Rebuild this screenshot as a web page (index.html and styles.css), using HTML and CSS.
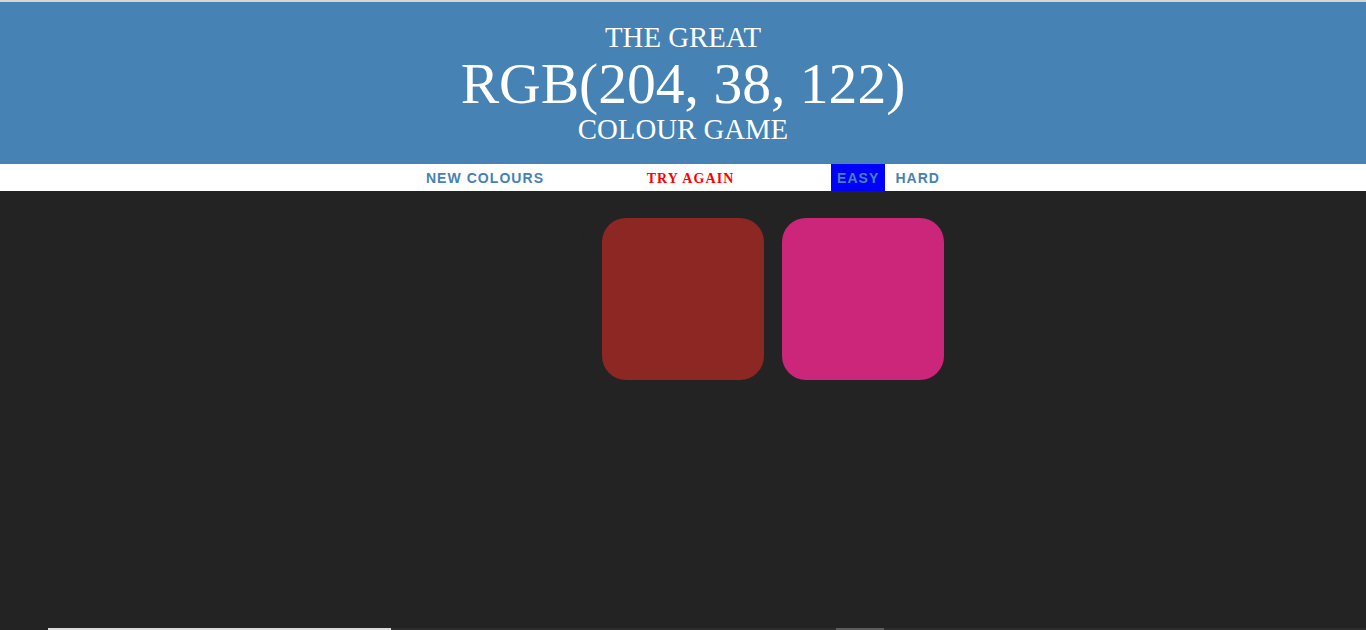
FILE: index.html
```html
<!DOCTYPE html>
<html>
<head>
<meta charset="utf-8">
<title>Colour Game</title>
<link rel="stylesheet" href="styles.css">
</head>
<body>
<div class="topline"></div>
<h1 class="title">
  <span class="line">The Great</span>
  <span class="line big">RGB(204, 38, 122)</span>
  <span class="line">Colour Game</span>
</h1>
<div class="stripe">
  <button class="btn">New Colours</button>
  <span class="message">Try Again</span>
  <button class="btn selected">Easy</button>
  <button class="btn">Hard</button>
</div>
<main class="main">
  <div class="container">
    <div class="square sq-hidden"></div>
    <div class="square sq-red"></div>
    <div class="square sq-pink"></div>
  </div>
</main>
<div class="bottomstrip">
  <div class="seg seg-a"></div>
  <div class="seg seg-b"></div>
  <div class="seg seg-c"></div>
  <div class="seg seg-d"></div>
  <div class="seg seg-e"></div>
</div>
</body>
</html>
```
FILE: styles.css
```css
html, body {
  margin: 0;
  padding: 0;
}
body {
  background: #232323;
  font-family: "Liberation Serif", "Times New Roman", serif;
  height: 630px;
  display: flex;
  flex-direction: column;
  overflow: hidden;
}
.topline {
  height: 2px;
  background: #d6d6d6;
  flex: none;
}
.title {
  margin: 0;
  flex: none;
  background: #4682b4;
  color: #ffffff;
  font-weight: normal;
  font-size: 28.8px;
  text-transform: uppercase;
  text-align: center;
  padding: 20px 0 19px;
}
.line {
  display: block;
  line-height: 30.8px;
}
.line.big {
  font-size: 57.6px;
  line-height: 61.6px;
}
.stripe {
  flex: none;
  background: #ffffff;
  height: 27px;
  display: flex;
  justify-content: center;
  align-items: stretch;
  gap: 4px;
}
.btn {
  border: none;
  background: none;
  margin: 0;
  padding: 2px 6px 0;
  font-family: "Liberation Sans", Arial, sans-serif;
  font-size: 14px;
  font-weight: 700;
  letter-spacing: 1.05px;
  text-transform: uppercase;
  color: #4682b4;
  line-height: 25px;
}
.btn.selected {
  background: #0000ff;
}
.message {
  width: 273px;
  padding-top: 2px;
  text-align: center;
  color: #ff0000;
  font-family: "Liberation Serif", "Times New Roman", serif;
  font-weight: 700;
  font-size: 14px;
  letter-spacing: 1.1px;
  text-transform: uppercase;
  line-height: 25px;
}
.main {
  flex: 1;
  padding-top: 18px;
}
.container {
  width: 540px;
  margin: 0 auto;
  display: flex;
}
.square {
  width: 162px;
  height: 162px;
  margin: 9px;
  border-radius: 24px;
}
.sq-hidden { background: #232323; }
.sq-red { background: #8c2723; }
.sq-pink { background: #cc267a; }
.bottomstrip {
  flex: none;
  height: 2px;
  display: flex;
  background: #232323;
}
.seg { height: 2px; }
.seg-a { width: 48px; background: #232323; }
.seg-b { width: 343px; background: #dcdcdc; }
.seg-c { width: 445px; background: #2c2c2c; }
.seg-d { width: 48px; background: #5c5c5c; }
.seg-e { flex: 1; background: #2c2c2c; }
```
